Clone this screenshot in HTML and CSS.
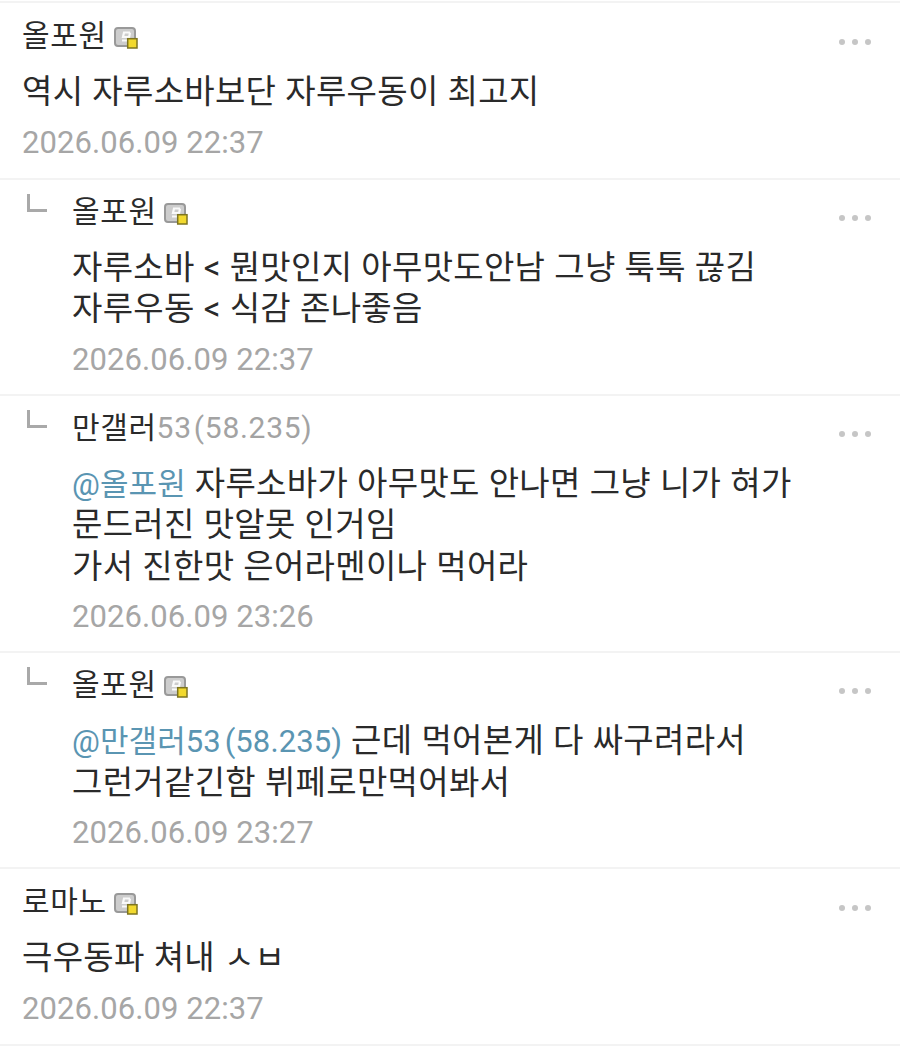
FILE: index.html
```html
<!DOCTYPE html>
<html lang="ko">
<head>
<meta charset="utf-8">
<title>댓글</title>
<link rel="stylesheet" href="styles.css">
</head>
<body>
<ul class="list">
  <li class="item">
    <div class="head"><span class="name">올포원</span><svg class="badge" viewBox="0 0 24 24"><rect x="1" y="2" width="20" height="18" rx="3" fill="#cdcdcd" stroke="#999" stroke-width="2"/><path d="M16 6.5H10L9 11H14.5M16 6.5L14.5 14.5H8" fill="none" stroke="#fafafa" stroke-width="2.2"/><rect x="13.7" y="12.7" width="9.3" height="9.3" fill="#f2d92e" stroke="#7d7420" stroke-width="1.5"/></svg><span class="more"><i></i><i></i><i></i></span></div>
    <p class="body">역시 자루소바보단 자루우동이 최고지</p>
    <div class="date">2026.06.09 22:37</div>
  </li>
  <li class="item reply">
    <svg class="arrow" viewBox="0 0 20 18"><path d="M1.5 0v16.5H20" fill="none" stroke="#a9a9a9" stroke-width="3"/></svg>
    <div class="head"><span class="name">올포원</span><svg class="badge" viewBox="0 0 24 24"><rect x="1" y="2" width="20" height="18" rx="3" fill="#cdcdcd" stroke="#999" stroke-width="2"/><path d="M16 6.5H10L9 11H14.5M16 6.5L14.5 14.5H8" fill="none" stroke="#fafafa" stroke-width="2.2"/><rect x="13.7" y="12.7" width="9.3" height="9.3" fill="#f2d92e" stroke="#7d7420" stroke-width="1.5"/></svg><span class="more"><i></i><i></i><i></i></span></div>
    <p class="body">자루소바 &lt; 뭔맛인지 아무맛도안남 그냥 툭툭 끊김<br>자루우동 &lt; 식감 존나좋음</p>
    <div class="date">2026.06.09 22:37</div>
  </li>
  <li class="item reply">
    <svg class="arrow" viewBox="0 0 20 18"><path d="M1.5 0v16.5H20" fill="none" stroke="#a9a9a9" stroke-width="3"/></svg>
    <div class="head"><span class="name">만갤러<span class="ip">53 (58.235)</span></span><span class="more"><i></i><i></i><i></i></span></div>
    <p class="body"><span class="mention">@올포원</span> 자루소바가 아무맛도 안나면 그냥 니가 혀가<br>문드러진 맛알못 인거임<br>가서 진한맛 은어라멘이나 먹어라</p>
    <div class="date">2026.06.09 23:26</div>
  </li>
  <li class="item reply">
    <svg class="arrow" viewBox="0 0 20 18"><path d="M1.5 0v16.5H20" fill="none" stroke="#a9a9a9" stroke-width="3"/></svg>
    <div class="head"><span class="name">올포원</span><svg class="badge" viewBox="0 0 24 24"><rect x="1" y="2" width="20" height="18" rx="3" fill="#cdcdcd" stroke="#999" stroke-width="2"/><path d="M16 6.5H10L9 11H14.5M16 6.5L14.5 14.5H8" fill="none" stroke="#fafafa" stroke-width="2.2"/><rect x="13.7" y="12.7" width="9.3" height="9.3" fill="#f2d92e" stroke="#7d7420" stroke-width="1.5"/></svg><span class="more"><i></i><i></i><i></i></span></div>
    <p class="body"><span class="mention">@만갤러53 (58.235)</span> 근데 먹어본게 다 싸구려라서<br>그런거같긴함 뷔페로만먹어봐서</p>
    <div class="date">2026.06.09 23:27</div>
  </li>
  <li class="item">
    <div class="head"><span class="name">로마노</span><svg class="badge" viewBox="0 0 24 24"><rect x="1" y="2" width="20" height="18" rx="3" fill="#cdcdcd" stroke="#999" stroke-width="2"/><path d="M16 6.5H10L9 11H14.5M16 6.5L14.5 14.5H8" fill="none" stroke="#fafafa" stroke-width="2.2"/><rect x="13.7" y="12.7" width="9.3" height="9.3" fill="#f2d92e" stroke="#7d7420" stroke-width="1.5"/></svg><span class="more"><i></i><i></i><i></i></span></div>
    <p class="body">극우동파 쳐내 ㅅㅂ</p>
    <div class="date">2026.06.09 22:37</div>
  </li>
</ul>
</body>
</html>
```
FILE: styles.css
```css
html, body {
  margin: 0;
  padding: 0;
  background: #fff;
}
.list {
  list-style: none;
  margin: 0;
  padding: 1px 0 0;
  font-family: Roboto, "Noto Sans CJK KR", sans-serif;
  color: #2a2a2a;
}
.item {
  position: relative;
  box-sizing: border-box;
  padding: 14px 0 14px 22px;
  border-top: 2px solid #f3f3f3;
}
.item:last-child {
  border-bottom: 2px solid #f3f3f3;
}
.reply {
  padding: 13px 0 13px 72px;
}
.arrow {
  position: absolute;
  left: 27px;
  top: 14px;
  width: 20px;
  height: 18px;
}
.head {
  display: flex;
  align-items: center;
  height: 38px;
}
.name {
  font-size: 30px;
  line-height: 38px;
  letter-spacing: 0.6px;
}
.ip {
  color: #a3a3a3;
  letter-spacing: 0.7px;
  word-spacing: -6px;
}
.badge {
  width: 24px;
  height: 24px;
  margin: 4px 0 0 7px;
}
.more {
  position: absolute;
  right: 29px;
  top: 36px;
  display: flex;
  gap: 7px;
}
.reply .more {
  top: 35px;
}
.more i {
  width: 6px;
  height: 6px;
  border-radius: 50%;
  background: #c6c6c6;
}
.body {
  margin: 16px 0 0;
  font-size: 33px;
  line-height: 41.5px;
  letter-spacing: 0.3px;
  word-spacing: 0.5px;
}
.mention {
  color: #5a95b2;
  font-size: 31px;
  line-height: 1;
  letter-spacing: 0.1px;
  word-spacing: -4px;
}
.date {
  margin-top: 9px;
  font-size: 31px;
  line-height: 42px;
  letter-spacing: 0.07px;
  color: #a6a6a6;
}
```
